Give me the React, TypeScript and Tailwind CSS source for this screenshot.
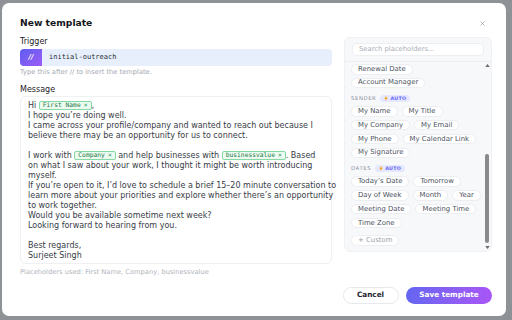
import { X } from 'lucide-react';

const font = { fontFamily: '"DejaVu Sans", "Noto Sans", sans-serif' };

const Token: React.FC<{ label: string }> = ({ label }) => (
  <span className="inline-flex h-[9px] items-center rounded-[2px] border border-[#86d9a4] bg-[#ecfbf1] px-[3px] align-middle font-['DejaVu_Sans_Mono',monospace] text-[6.3px] leading-none text-[#1f7a45]">
    {label}
    <span className="ml-[3px] text-[#3c9a62]">×</span>
  </span>
);

const Chip: React.FC<{ label: string; muted?: boolean }> = ({ label, muted }) => (
  <span
    className={`flex h-[10.5px] items-center whitespace-nowrap rounded-full border border-[#eceef2] bg-white px-[6px] text-[6.9px] leading-none ${
      muted ? 'text-[#9aa1ab]' : 'text-[#4b5260]'
    }`}
  >
    {label}
  </span>
);

const Bolt = () => (
  <svg viewBox="0 0 10 14" className="h-[5px] w-[4px]">
    <polygon points="6,0 0,8 4,8 3,14 10,5 6,5" fill="#f59e0b" />
  </svg>
);

const SectionHead: React.FC<{ title: string }> = ({ title }) => (
  <div className="mb-[4px] mt-[7px] flex h-[7px] items-center gap-[4px]">
    <span className="text-[5.3px] font-medium tracking-[0.6px] text-[#8a909a]">
      {title}
    </span>
    <span className="flex h-[6.5px] items-center gap-[2px] rounded-full bg-[#e6e8ff] px-[4px] text-[4.8px] font-semibold tracking-[0.3px] text-[#6366f1]">
      <Bolt />
      AUTO
    </span>
  </div>
);

const Row: React.FC<{ items: string[] }> = ({ items }) => (
  <div className="flex gap-[4px]">
    {items.map((i) => (
      <Chip key={i} label={i} />
    ))}
  </div>
);

export default function App() {
  return (
    <div className="h-[320px] w-[512px] overflow-hidden bg-[#8e9196] pl-[2px] pt-[3px]" style={font}>
      <div className="flex h-[313px] w-[504px] flex-col rounded-[7px] bg-white pl-[18px] pr-[14px] pt-[13px]">
        {/* header */}
        <div className="flex h-[14px] items-center justify-between">
          <span className="text-[9.2px] font-semibold leading-[14px] text-[#15171c]">
            New template
          </span>
          <X className="mr-[6px] h-[7px] w-[7px] text-[#8a8f98]" strokeWidth={2} />
        </div>

        <div className="mt-[7px] flex items-start gap-[12px]">
          {/* left column */}
          <div className="flex w-[312px] flex-col">
            <span className="text-[8px] font-medium leading-[10px] text-[#1d2026]">Trigger</span>
            <div className="mt-[2px] flex h-[17px] overflow-hidden rounded-[4px] bg-[#e8effc]">
              <div className="flex w-[22px] items-center justify-center bg-gradient-to-br from-[#5b5cf0] to-[#9b5cf6] text-[7px] font-bold italic text-white">
                //
              </div>
              <span className="ml-[7px] flex items-center font-['DejaVu_Sans_Mono',monospace] text-[7px] text-[#2a2f3a]">
                initial-outreach
              </span>
            </div>
            <span className="mt-[2px] text-[6.7px] leading-[8px] text-[#a3a8b1]">
              Type this after // to insert the template.
            </span>
            <span className="mt-[9px] text-[8px] font-medium leading-[10px] text-[#1d2026]">Message</span>
            <div className="mt-[1px] h-[168px] rounded-[6px] border border-[#eef0f3] bg-white pl-[7px] pt-[4px] text-[8px] leading-[10px] text-[#383c46]">
              <div className="whitespace-nowrap">
                Hi <Token label="First Name" />,
              </div>
              <div>I hope you’re doing well.</div>
              <div className="whitespace-nowrap">I came across your profile/company and wanted to reach out because I</div>
              <div>believe there may be an opportunity for us to connect.</div>
              <div className="h-[10px]" />
              <div className="whitespace-nowrap">
                I work with <Token label="Company" /> and help businesses with <Token label="businessvalue" />. Based
              </div>
              <div className="whitespace-nowrap">on what I saw about your work, I thought it might be worth introducing</div>
              <div>myself.</div>
              <div className="whitespace-nowrap">If you’re open to it, I’d love to schedule a brief 15–20 minute conversation to</div>
              <div className="whitespace-nowrap">learn more about your priorities and explore whether there’s an opportunity</div>
              <div>to work together.</div>
              <div>Would you be available sometime next week?</div>
              <div>Looking forward to hearing from you.</div>
              <div className="h-[10px]" />
              <div>Best regards,</div>
              <div>Surjeet Singh</div>
            </div>
            <span className="mt-[4px] text-[6.7px] leading-[8px] text-[#b0b5bd]">
              Placeholders used: First Name, Company, businessvalue
            </span>
          </div>

          {/* right panel */}
          <div className="flex h-[215px] w-[148px] flex-col overflow-hidden rounded-[6px] border border-[#eff1f4] bg-[#f7f8fa]">
            <div className="px-[7px] pb-[5px] pt-[5px]">
              <div className="flex h-[12.5px] items-center rounded-[4px] border border-[#eceef2] bg-white pl-[6px] text-[6.8px] text-[#a9aeb6]">
                Search placeholders...
              </div>
            </div>
            <div className="flex flex-1 border-t border-[#eceef2]">
              <div className="flex flex-1 flex-col pl-[6px] pt-[2.5px]">
                <div className="flex flex-col gap-[3px]">
                  <Row items={['Renewal Date']} />
                  <Row items={['Account Manager']} />
                </div>
                <SectionHead title="SENDER" />
                <div className="flex flex-col gap-[3.4px]">
                  <Row items={['My Name', 'My Title']} />
                  <Row items={['My Company', 'My Email']} />
                  <Row items={['My Phone', 'My Calendar Link']} />
                  <Row items={['My Signature']} />
                </div>
                <SectionHead title="DATES" />
                <div className="flex flex-col gap-[3.4px]">
                  <Row items={['Today’s Date', 'Tomorrow']} />
                  <Row items={['Day of Week', 'Month', 'Year']} />
                  <Row items={['Meeting Date', 'Meeting Time']} />
                  <Row items={['Time Zone']} />
                </div>
                <div className="mt-[7px] flex">
                  <Chip label="+ Custom" muted />
                </div>
              </div>
              {/* scrollbar */}
              <div className="flex w-[8px] flex-col items-center pb-[2px] pt-[2px]">
                <svg viewBox="0 0 6 4" className="h-[3px] w-[5px]">
                  <polygon points="3,0 6,4 0,4" fill="#6b6b6b" />
                </svg>
                <div className="flex-1" />
                <div className="h-[89px] w-[4px] rounded-full bg-[#8a8a8a]" />
                <svg viewBox="0 0 6 4" className="mt-[3px] h-[3px] w-[5px]">
                  <polygon points="0,0 6,0 3,4" fill="#6b6b6b" />
                </svg>
              </div>
            </div>
          </div>
        </div>

        {/* footer */}
        <div className="mb-[12.5px] mt-auto flex justify-end gap-[7.5px]">
          <button className="h-[16.7px] w-[56px] rounded-full border border-[#e6e8ec] bg-white text-[7.3px] font-semibold text-[#1f2430]">
            Cancel
          </button>
          <button className="h-[16.7px] w-[86px] rounded-full bg-gradient-to-r from-[#6366f1] to-[#a855f7] text-[7.3px] font-semibold text-white">
            Save template
          </button>
        </div>
      </div>
    </div>
  );
}
